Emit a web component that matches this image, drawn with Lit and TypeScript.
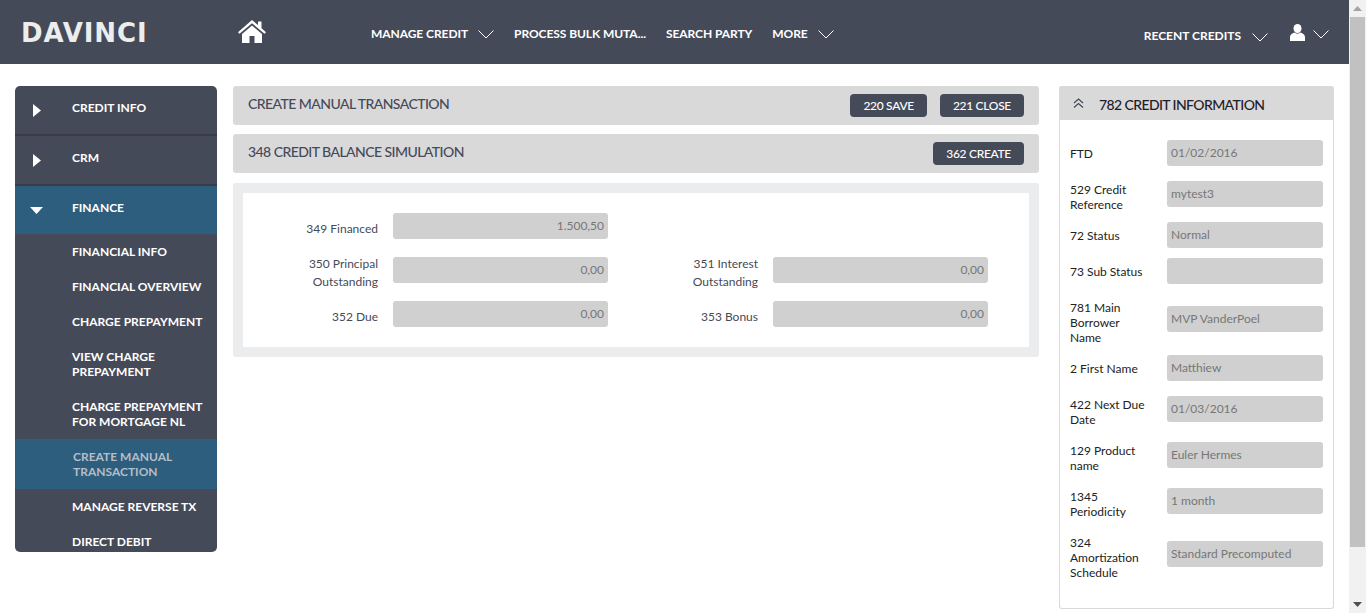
import { css, html, LitElement } from "lit";
import { customElement } from "lit/decorators.js";

const chevron = html`<svg class="chev" width="16" height="9" viewBox="0 0 16 9"><path d="M.5.5 8 8 15.5.5" fill="none" stroke="#fff"/></svg>`;

const sideItems = [
  "FINANCIAL INFO",
  "FINANCIAL OVERVIEW",
  "CHARGE PREPAYMENT",
  "VIEW CHARGE PREPAYMENT",
  "CHARGE PREPAYMENT FOR MORTGAGE NL",
  "CREATE MANUAL TRANSACTION",
  "MANAGE REVERSE TX",
  "DIRECT DEBIT",
];

const infoRows: [string, string][] = [
  ["FTD", "01/02/2016"],
  ["529 Credit Reference", "mytest3"],
  ["72 Status", "Normal"],
  ["73 Sub Status", ""],
  ["781 Main Borrower Name", "MVP VanderPoel"],
  ["2 First Name", "Matthiew"],
  ["422 Next Due Date", "01/03/2016"],
  ["129 Product name", "Euler Hermes"],
  ["1345 Periodicity", "1 month"],
  ["324 Amortization Schedule", "Standard Precomputed"],
];

const simRows: [string, string, string?, string?][] = [
  ["349 Financed", "1.500,50"],
  ["350 Principal Outstanding", "0,00", "351 Interest Outstanding", "0,00"],
  ["352 Due", "0,00", "353 Bonus", "0,00"],
];

@customElement("app-root")
export class AppRoot extends LitElement {
  static styles = css`
    :host {
      display: flex;
      height: 613px;
      overflow: hidden;
      font-family: Lato, "Noto Sans", sans-serif;
      background: #fff;
      color: #454a59;
    }
    .page {
      flex: 1;
      min-width: 0;
    }
    .topbar {
      height: 64px;
      background: #454a59;
      display: flex;
      align-items: center;
      color: #fff;
      font-size: 12px;
      font-weight: 700;
      letter-spacing: -0.07px;
    }
    .logo {
      width: 238px;
      padding: 2px 0 0 21px;
      box-sizing: border-box;
      font-family: "DejaVu Sans", sans-serif;
      font-size: 26px;
      font-weight: 700;
      letter-spacing: 0.9px;
      color: #eceded;
      flex: none;
    }
    .home {
      width: 133px;
      flex: none;
      display: flex;
      padding-bottom: 2px;
    }
    .nav {
      display: flex;
      align-items: center;
      gap: 20px;
      flex: 1;
      padding-top: 2px;
    }
    .nav span {
      display: flex;
      align-items: center;
    }
    .chev {
      margin-left: 10px;
      margin-top: 3px;
    }
    .right {
      display: flex;
      align-items: center;
      padding-right: 20px;
      padding-top: 7px;
      letter-spacing: 0;
    }
    .right .chev {
      margin-left: 11px;
    }
    .user {
      margin-left: 22px;
      margin-bottom: 6px;
    }
    .right .last {
      margin-left: 8px;
      margin-top: 0;
      margin-bottom: 2px;
    }
    .body {
      display: flex;
      align-items: flex-start;
      padding: 22px 15px 0;
      gap: 16px;
    }
    .side {
      width: 202px;
      flex: none;
      background: #454a59;
      border-radius: 5px;
      color: #fff;
      font-size: 12px;
      font-weight: 700;
      overflow: hidden;
      height: 466px;
    }
    .head {
      height: 50px;
      display: flex;
      align-items: center;
      border-bottom: 2px solid #383c4a;
      padding-bottom: 5px;
      box-sizing: border-box;
    }
    .head.open {
      background: #2e5e7e;
      border-bottom: 0;
      height: 48px;
      padding-bottom: 6px;
    }
    .tri {
      width: 57px;
      flex: none;
      display: flex;
      padding-left: 18px;
      margin-top: 6px;
      box-sizing: border-box;
    }
    .open .tri {
      padding-left: 15px;
    }
    .sub {
      padding: 10px 14px 10px 57px;
      line-height: 15px;
    }
    .sub.active {
      background: #2e5e7e;
      color: #b5bdc6;
      padding-left: 58px;
    }
    .center {
      flex: 1;
      min-width: 0;
      display: flex;
      flex-direction: column;
      gap: 9px;
      margin-right: 4px;
    }
    .bar {
      height: 39px;
      background: #d9d9d9;
      border-radius: 3px;
      display: flex;
      align-items: center;
      justify-content: space-between;
      padding: 0 15px;
      font-size: 14px;
      font-weight: 500;
      letter-spacing: -0.56px;
      color: #454a59;
    }
    .bar > span {
      margin-top: -4px;
    }
    .btns {
      display: flex;
      gap: 13px;
    }
    button {
      height: 23px;
      border: 0;
      border-radius: 4px;
      background: #454a59;
      color: #fff;
      font: 500 12px Lato, sans-serif;
      letter-spacing: -0.3px;
      padding: 0 13px;
    }
    .card {
      margin-top: 1px;
      background: #ebecee;
      border-radius: 3px;
      padding: 10px;
    }
    .inner {
      background: #fff;
      padding: 20px 0;
      display: flex;
      flex-direction: column;
      gap: 18px;
    }
    .sim {
      display: grid;
      grid-template-columns: 135px 215px 135px 215px;
      grid-template-rows: 26px;
      column-gap: 15px;
      align-items: center;
      font-size: 12px;
      line-height: 18px;
      text-align: right;
    }
    .sim .val {
      padding-right: 4px;
    }
    .sim .lbl {
      padding-left: 30px;
      margin-top: 5px;
    }
    .val {
      height: 26px;
      line-height: 25px;
      background: #d0d0d0;
      border-radius: 3px;
      color: #777;
      font-size: 12px;
      box-sizing: border-box;
    }
    .info {
      width: 275px;
      flex: none;
      border: 1px solid #d9d9d9;
      border-top: 0;
      border-radius: 3px;
      box-sizing: border-box;
      height: 523px;
    }
    .info-head {
      height: 34px;
      margin: 0 -1px;
      padding: 2px 0 0 14px;
      box-sizing: border-box;
      background: #d9d9d9;
      border-radius: 3px 3px 0 0;
      display: flex;
      align-items: center;
      font-size: 14px;
      font-weight: 500;
      letter-spacing: -0.6px;
      color: #1f2027;
      gap: 15px;
    }
    .info-head svg {
      margin-top: -3px;
    }
    .info-rows {
      padding: 15px 10px 0;
    }
    .row {
      display: grid;
      grid-template-columns: 97px 156px;
      align-items: center;
      min-height: 36px;
      font-size: 12px;
      line-height: 15px;
      color: #222;
    }
    .row .lbl {
      width: 78px;
      padding: 11px 0 5px;
      align-self: start;
    }
    .row .val {
      padding-left: 4px;
      margin-bottom: 1px;
    }
    .scroll {
      width: 17px;
      flex: none;
      background: #f1f1f1;
      display: flex;
      flex-direction: column;
      align-items: center;
    }
    .arrow {
      height: 17px;
      flex: none;
      display: flex;
      align-items: center;
      justify-content: center;
    }
    .thumb {
      width: 15px;
      height: 530px;
      flex: none;
      background: #c1c1c1;
    }
    .track {
      flex: 1;
    }
  `;

  private row(label: string, value: string) {
    return html`<div class="row"><div class="lbl">${label}</div><div class="val">${value}</div></div>`;
  }

  render() {
    const triRight = html`<svg width="8" height="13" viewBox="0 0 8 13"><path d="M0 0 8 6.500 0 13z" fill="#fff"/></svg>`;
    const triDown = html`<svg width="13" height="7" viewBox="0 0 13 7"><path d="M0 0H13L6.500 7z" fill="#fff"/></svg>`;
    return html`
      <div class="page">
        <header class="topbar">
          <div class="logo">DAVINCI</div>
          <div class="home">
            <svg width="28" height="23" viewBox="0 0 28 23">
              <path d="M14 0 20 5V1.500H23.500V8.200L28 12.300 26.500 13.800 14 3.200 1.500 13.800 0 12.300z" fill="#fff"/>
              <path d="M14 5.500 24 14V23H16.500V16H11.500V23H4V14z" fill="#fff"/>
            </svg>
          </div>
          <nav class="nav">
            <span>MANAGE CREDIT ${chevron}</span>
            <span>PROCESS BULK MUTA...</span>
            <span>SEARCH PARTY</span>
            <span>MORE ${chevron}</span>
          </nav>
          <div class="right">
            <span>RECENT CREDITS</span>
            ${chevron}
            <svg class="user" width="15" height="17" viewBox="0 0 15 17">
              <ellipse cx="7.500" cy="4.500" rx="4" ry="4.500" fill="#fff"/>
              <path d="M0 17V13C0 10.500 2 9.500 4.500 8.500 6 10 9 10 10.500 8.500 13 9.500 15 10.500 15 13V17z" fill="#fff"/>
            </svg>
            <svg class="chev last" width="16" height="9" viewBox="0 0 16 9"><path d="M.5.5 8 8 15.500.5" fill="none" stroke="#fff"/></svg>
          </div>
        </header>
        <div class="body">
          <aside class="side">
            <div class="head"><div class="tri">${triRight}</div>CREDIT INFO</div>
            <div class="head"><div class="tri">${triRight}</div>CRM</div>
            <div class="head open"><div class="tri">${triDown}</div>FINANCE</div>
            ${sideItems.map(
              (s) => html`<div class="sub ${s === "CREATE MANUAL TRANSACTION" ? "active" : ""}">${s}</div>`
            )}
          </aside>
          <main class="center">
            <div class="bar">
              <span>CREATE MANUAL TRANSACTION</span>
              <div class="btns"><button>220 SAVE</button><button>221 CLOSE</button></div>
            </div>
            <div class="bar">
              <span>348 CREDIT BALANCE SIMULATION</span>
              <div class="btns"><button>362 CREATE</button></div>
            </div>
            <div class="card">
              <div class="inner">
                ${simRows.map(
                  ([a, av, b, bv]) => html`<div class="sim">
                    <div class="lbl">${a}</div>
                    <div class="val">${av}</div>
                    ${b ? html`<div class="lbl">${b}</div><div class="val">${bv}</div>` : ""}
                  </div>`
                )}
              </div>
            </div>
          </main>
          <aside class="info">
            <div class="info-head">
              <svg width="11" height="10" viewBox="0 0 11 10">
                <path d="M1 5 5.500 1 10 5M1 9.500 5.500 5.500 10 9.500" fill="none" stroke="#454a59" stroke-width="1.200"/>
              </svg>
              782 CREDIT INFORMATION
            </div>
            <div class="info-rows">${infoRows.map(([l, v]) => this.row(l, v))}</div>
          </aside>
        </div>
      </div>
      <div class="scroll">
        <div class="arrow">
          <svg width="9" height="5" viewBox="0 0 9 5"><path d="M0 5 4.500 0 9 5z" fill="#a3a3a3"/></svg>
        </div>
        <div class="thumb"></div>
        <div class="track"></div>
        <div class="arrow">
          <svg width="9" height="5" viewBox="0 0 9 5"><path d="M0 0H9L4.500 5z" fill="#505050"/></svg>
        </div>
      </div>
    `;
  }
}
